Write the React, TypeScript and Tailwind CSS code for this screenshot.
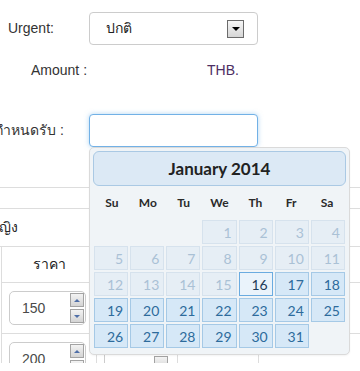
import React from 'react';

type DayState = 'empty' | 'off' | 'on' | 'today';

const weekDays = ['Su', 'Mo', 'Tu', 'We', 'Th', 'Fr', 'Sa'];

// January 2014 starts on a Wednesday
const buildDays = () => {
  const cells: { n: number | null; state: DayState }[] = [];
  for (let i = 0; i < 3; i++) cells.push({ n: null, state: 'empty' });
  for (let d = 1; d <= 31; d++) {
    cells.push({ n: d, state: d < 16 ? 'off' : d === 16 ? 'today' : 'on' });
  }
  cells.push({ n: null, state: 'empty' });
  return cells;
};

const cellClass: Record<DayState, string> = {
  empty: '',
  off: 'border border-[#d6e2ed] bg-[#e6eef5] text-[#aac1d5]',
  on: 'border border-[#a5c9e6] bg-[#d6e8f7] text-[#2d6b9c]',
  today: 'border border-[#6aabe0] bg-[#eaf3fb] text-[#1e3b58]',
};

const SpinButtons: React.FC = () => (
  <div className="flex flex-col gap-[2px]">
    <div className="w-[14px] h-[14px] border border-[#a3a3a3] bg-gradient-to-b from-[#f3f3f3] to-[#d4d4d4] flex items-center justify-center">
      <div className="w-0 h-0 border-l-[3px] border-r-[3px] border-b-[3px] border-l-transparent border-r-transparent border-b-[#4f6fa8]" />
    </div>
    <div className="w-[14px] h-[14px] border border-[#a3a3a3] bg-gradient-to-b from-[#f3f3f3] to-[#d4d4d4] flex items-center justify-center">
      <div className="w-0 h-0 border-l-[3px] border-r-[3px] border-t-[3px] border-l-transparent border-r-transparent border-t-[#4f6fa8]" />
    </div>
  </div>
);

const SpinInput: React.FC<{ value: string }> = ({ value }) => (
  <div className="w-[77px] h-[34px] border border-[#cccccc] rounded-[5px] bg-white flex items-center justify-between pl-[12px] pr-[1px]">
    <span className="text-[14px] text-[#4a4a4a]">{value}</span>
    <SpinButtons />
  </div>
);

const DatePicker: React.FC = () => {
  const days = buildDays();
  return (
    <div className="absolute left-[89px] top-[147px] w-[261px] h-[208px] bg-[#f0f4f7] border border-[#dadada] rounded-[5px] p-[3px] shadow-[0_1px_2px_rgba(0,0,0,0.05)] font-['Lato','Open_Sans',sans-serif]">
      {/* Header */}
      <div className="h-[35px] bg-[#dce9f5] border border-[#aac9e4] rounded-[6px] flex items-center justify-center text-[17px] font-bold text-[#222]">
        January 2014
      </div>

      {/* Week days */}
      <div className="ml-[1px] w-[251px] h-[33px] grid grid-cols-7 items-center">
        {weekDays.map((d) => (
          <div key={d} className="text-center text-[12px] font-bold text-[#2a2a2a]">
            {d}
          </div>
        ))}
      </div>

      {/* Days */}
      <div className="ml-[1px] mt-[1px] w-[251px] grid grid-cols-7 gap-[2px] auto-rows-[24px]">
        {days.map((c, i) => (
          <div
            key={i}
            className={`flex items-center justify-end pr-[4px] text-[14px] ${cellClass[c.state]}`}
          >
            {c.n}
          </div>
        ))}
      </div>
    </div>
  );
};

const App: React.FC = () => {
  return (
    <div className="w-[360px] h-[371px] bg-white overflow-hidden font-['Liberation_Sans',Arial,sans-serif] text-[14px] text-[#333]">
      <div className="relative h-[363px] overflow-hidden pt-[12px]">
        {/* Urgent */}
        <div className="flex items-center h-[33px]">
          <div className="w-[89px] pl-[8px]">Urgent:</div>
          <div className="w-[169px] h-[33px] border border-[#cccccc] rounded-[4px] bg-white flex items-center justify-between pl-[16px] pr-[13px]">
            <span className="text-[#222]">ปกติ</span>
            <div className="w-[17px] h-[18px] border border-[#6b6b6b] bg-gradient-to-b from-[#f6f6f6] to-[#d6d6d6] flex items-center justify-center">
              <div className="w-0 h-0 border-l-[4px] border-r-[4px] border-t-[4px] border-l-transparent border-r-transparent border-t-black" />
            </div>
          </div>
        </div>

        {/* Amount */}
        <div className="flex items-center h-[20px] mt-[15px]">
          <span className="ml-[31px] w-[176px]">Amount :</span>
          <span className="text-[#4d2f63]">THB.</span>
        </div>

        {/* Date */}
        <div className="flex items-center h-[33px] mt-[34px]">
          <div className="w-[64px] flex justify-end whitespace-nowrap">
            <span>กำหนดรับ :</span>
          </div>
          <div className="ml-[25px] w-[169px] h-[33px] border border-[#72b1e6] rounded-[4px] bg-white shadow-[0_0_5px_rgba(102,175,233,0.5)]" />
        </div>

        {/* Section lines */}
        <div className="mt-[40px] h-[22px] border-t border-b border-[#dddddd]" />
        <div className="h-[38px] border-b border-[#dddddd] flex items-center">
          <span className="ml-[-10px] text-[#222]">หญิง</span>
        </div>

        {/* Price table */}
        <div className="ml-[1px] border-l border-[#dddddd] grid grid-cols-[95px_81px_81px_1fr]">
          <div className="h-[36px] border-b border-r border-[#dddddd] flex items-center justify-center text-[#222]">ราคา</div>
          <div className="h-[36px] border-b border-r border-[#dddddd]" />
          <div className="h-[36px] border-b border-r border-[#dddddd]" />
          <div className="h-[36px] border-b border-[#dddddd]" />

          <div className="h-[51px] border-b border-r border-[#dddddd] pt-[8px] pl-[7px]">
            <SpinInput value="150" />
          </div>
          <div className="h-[51px] border-b border-r border-[#dddddd]" />
          <div className="h-[51px] border-b border-r border-[#dddddd]" />
          <div className="h-[51px] border-b border-[#dddddd]" />

          <div className="h-[40px] border-r border-[#dddddd] pt-[8px] pl-[7px]">
            <SpinInput value="200" />
          </div>
          <div className="h-[40px] border-r border-[#dddddd] pt-[8px] pl-[7px] flex">
            <div className="w-[64px] h-[34px] border-l border-[#cccccc] flex justify-end items-start pt-[14px]">
              <div className="w-[14px] h-[14px] border border-[#a3a3a3] bg-gradient-to-b from-[#f3f3f3] to-[#d4d4d4]" />
            </div>
          </div>
          <div className="h-[40px] border-r border-[#dddddd] pl-[20px] pt-[12px] leading-none text-[12px] text-black">ˇ</div>
          <div className="h-[40px]" />
        </div>

        <DatePicker />
      </div>
    </div>
  );
};

export default App;
